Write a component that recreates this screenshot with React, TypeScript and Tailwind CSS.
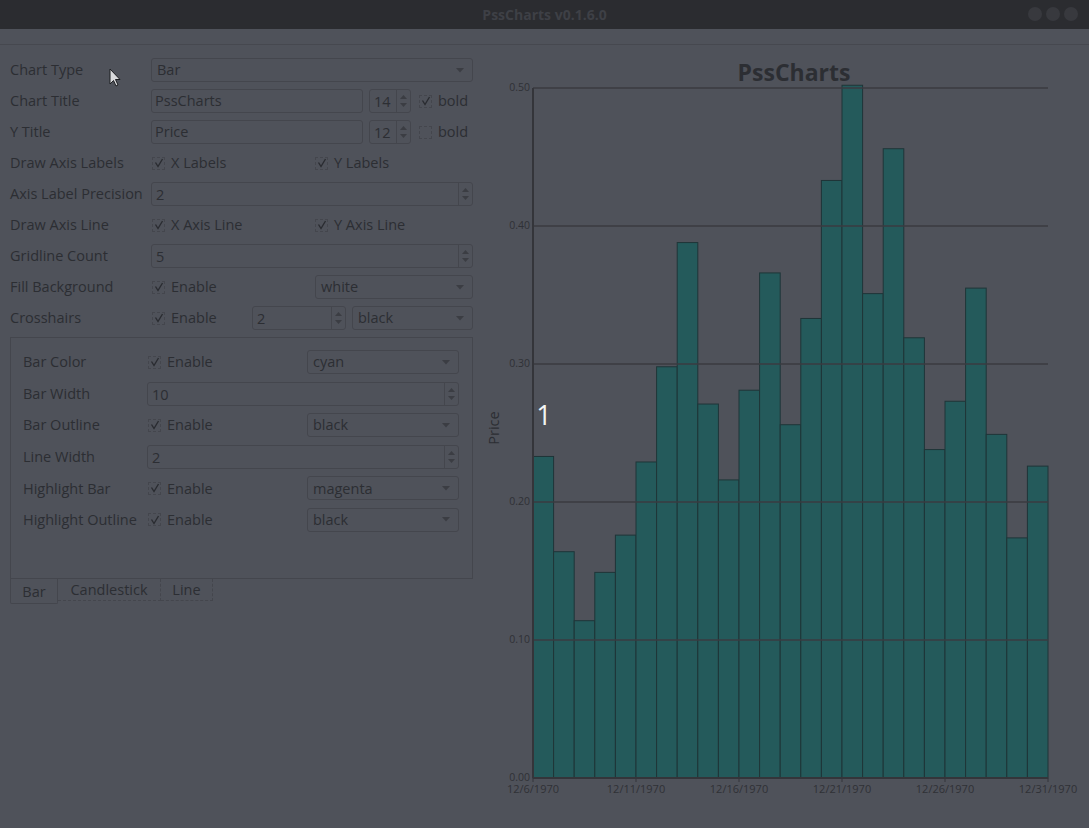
import React from "react";

const font = { fontFamily: '"Open Sans", "DejaVu Sans", sans-serif' };

const bars = [
  0.233, 0.164, 0.114, 0.149, 0.176, 0.229, 0.298, 0.388, 0.271, 0.216, 0.281, 0.366, 0.256,
  0.333, 0.433, 0.502, 0.351, 0.456, 0.319, 0.238, 0.273, 0.355, 0.249, 0.174, 0.226,
];

function Check({ on = true }: { on?: boolean }) {
  return (
    <span className="w-[13px] h-[13px] border border-dashed border-[#44464d] flex items-center justify-center shrink-0">
      {on && (
        <svg width="10" height="10" viewBox="0 0 10 10">
          <path d="M1.5 4.5 L4 8.5 L8.5 1" fill="none" stroke="#2a2c31" strokeWidth="1.4" />
        </svg>
      )}
    </span>
  );
}

function CheckLabel({ text, on = true }: { text: string; on?: boolean }) {
  return (
    <div className="flex items-center gap-[6px]">
      <Check on={on} />
      <span>{text}</span>
    </div>
  );
}

function Combo({ value, className = "" }: { value: string; className?: string }) {
  return (
    <div className={`h-[24px] border border-[#44464d] rounded-[3px] flex items-center pl-[5px] pr-[8px] ${className}`}>
      <span className="flex-1">{value}</span>
      <svg width="8" height="5" viewBox="0 0 8 5">
        <path d="M0 0 L8 0 L4 4.5 Z" fill="#3b3d43" />
      </svg>
    </div>
  );
}

function Field({ value, className = "" }: { value: string; className?: string }) {
  return (
    <div className={`h-[24px] border border-[#44464d] rounded-[3px] flex items-center px-[3px] ${className}`}>
      {value}
    </div>
  );
}

function Spin({ value, className = "" }: { value: string; className?: string }) {
  return (
    <div className={`h-[24px] border border-[#44464d] rounded-[3px] flex items-center ${className}`}>
      <span className="flex-1 pl-[4px] pt-[2px]">{value}</span>
      <div className="w-[14px] h-full border-l border-[#44464d] flex flex-col items-center justify-center gap-[4px]">
        <svg width="7" height="4" viewBox="0 0 7 4">
          <path d="M0 4 L7 4 L3.5 0 Z" fill="#3b3d43" />
        </svg>
        <svg width="7" height="4" viewBox="0 0 7 4">
          <path d="M0 0 L7 0 L3.5 4 Z" fill="#3b3d43" />
        </svg>
      </div>
    </div>
  );
}

function Row({ label, children, w = "w-[141px]" }: { label: string; children: React.ReactNode; w?: string }) {
  return (
    <div className="h-[24px] flex items-center">
      <span className={`${w} shrink-0 whitespace-nowrap`}>{label}</span>
      {children}
    </div>
  );
}

function Chart() {
  const left = 53;
  const right = 568;
  const top = 42;
  const bottom = 732;
  const bw = (right - left) / bars.length;
  const yOf = (v: number) => bottom - (v / 0.5) * (bottom - top);
  const ticks = [0.5, 0.4, 0.3, 0.2, 0.1, 0.0];
  const xLabels = ["12/6/1970", "12/11/1970", "12/16/1970", "12/21/1970", "12/26/1970", "12/31/1970"];
  return (
    <svg width="609" height="760" viewBox="0 0 609 760" style={font} className="block">
      <text x="314" y="35" textAnchor="middle" fontSize="23" fontWeight="700" fill="#2c2e33">
        PssCharts
      </text>
      {bars.map((v, i) => (
        <rect
          key={i}
          x={left + i * bw}
          y={yOf(v)}
          width={bw}
          height={bottom - yOf(v)}
          fill="#245a5b"
          stroke="#1f3538"
          strokeWidth="1"
        />
      ))}
      {ticks.map((t) => (
        <g key={t}>
          <line x1={left} x2={right} y1={yOf(t)} y2={yOf(t)} stroke="#3a3b40" strokeWidth="1.5" />
          <text x={left - 3} y={yOf(t) + 3} textAnchor="end" fontSize="10.5" fill="#2f3136">
            {t.toFixed(2)}
          </text>
        </g>
      ))}
      <line x1={left} x2={left} y1={top} y2={bottom} stroke="#34353a" strokeWidth="2" />
      <line x1={left} x2={right} y1={bottom} y2={bottom} stroke="#34353a" strokeWidth="2" />
      {xLabels.map((l, i) => {
        const x = left + i * bw * 5;
        return (
          <g key={l}>
            <line x1={x} x2={x} y1={bottom} y2={bottom + 4} stroke="#34353a" strokeWidth="1" />
            <text x={x} y={bottom + 15} textAnchor="middle" fontSize="11" fill="#2f3136">
              {l}
            </text>
          </g>
        );
      })}
      <text
        x="19"
        y="382"
        textAnchor="middle"
        fontSize="14.5"
        fill="#2c2e33"
        transform="rotate(-90 19 382)"
      >
        Price
      </text>
      <text x="64" y="379" textAnchor="middle" fontSize="27" fill="#f4f4f4">
        1
      </text>
    </svg>
  );
}

export default function App() {
  return (
    <div className="w-[1089px] h-[828px] bg-[#4f525a] text-[14.5px] text-[#2c2e33] flex flex-col relative overflow-hidden" style={font}>
      {/* title bar */}
      <div className="h-[29px] shrink-0 bg-[#2b2c30] flex items-center justify-center relative">
        <span className="font-bold text-[14px] text-[#3e4046]">PssCharts v0.1.6.0</span>
        <div className="absolute right-[11px] top-[7px] flex gap-[4px]">
          <span className="w-[14px] h-[14px] rounded-full bg-[#38393e]" />
          <span className="w-[14px] h-[14px] rounded-full bg-[#38393e]" />
          <span className="w-[14px] h-[14px] rounded-full bg-[#38393e]" />
        </div>
      </div>
      <div className="h-[16px] shrink-0 border-b border-[#46484f]" />

      <div className="flex flex-1">
        {/* controls */}
        <div className="w-[480px] pl-[10px] pr-[7px] pt-[13px] flex flex-col gap-[7px]">
          <Row label="Chart Type">
            <Combo value="Bar" className="flex-1" />
          </Row>
          <Row label="Chart Title">
            <Field value="PssCharts" className="w-[212px]" />
            <Spin value="14" className="w-[42px] ml-[6px]" />
            <div className="ml-[8px]">
              <CheckLabel text="bold" />
            </div>
          </Row>
          <Row label="Y Title">
            <Field value="Price" className="w-[212px]" />
            <Spin value="12" className="w-[42px] ml-[6px]" />
            <div className="ml-[8px]">
              <CheckLabel text="bold" on={false} />
            </div>
          </Row>
          <Row label="Draw Axis Labels">
            <div className="w-[164px] pl-[1px]">
              <CheckLabel text="X Labels" />
            </div>
            <CheckLabel text="Y Labels" />
          </Row>
          <Row label="Axis Label Precision">
            <Spin value="2" className="flex-1" />
          </Row>
          <Row label="Draw Axis Line">
            <div className="w-[164px] pl-[1px]">
              <CheckLabel text="X Axis Line" />
            </div>
            <CheckLabel text="Y Axis Line" />
          </Row>
          <Row label="Gridline Count">
            <Spin value="5" className="flex-1" />
          </Row>
          <Row label="Fill Background">
            <div className="w-[164px] pl-[1px]">
              <CheckLabel text="Enable" />
            </div>
            <Combo value="white" className="flex-1" />
          </Row>
          <Row label="Crosshairs">
            <div className="w-[101px] pl-[1px]">
              <CheckLabel text="Enable" />
            </div>
            <Spin value="2" className="w-[94px]" />
            <Combo value="black" className="flex-1 ml-[6px]" />
          </Row>

          {/* group */}
          <div className="h-[242px] border border-[#44464d] pl-[12px] pr-[13px] pt-[12px] flex flex-col gap-[7.6px]">
            <Row label="Bar Color" w="w-[125px]">
              <div className="w-[159px]">
                <CheckLabel text="Enable" />
              </div>
              <Combo value="cyan" className="flex-1" />
            </Row>
            <Row label="Bar Width" w="w-[124px]">
              <Spin value="10" className="flex-1" />
            </Row>
            <Row label="Bar Outline" w="w-[125px]">
              <div className="w-[159px]">
                <CheckLabel text="Enable" />
              </div>
              <Combo value="black" className="flex-1" />
            </Row>
            <Row label="Line Width" w="w-[124px]">
              <Spin value="2" className="flex-1" />
            </Row>
            <Row label="Highlight Bar" w="w-[125px]">
              <div className="w-[159px]">
                <CheckLabel text="Enable" />
              </div>
              <Combo value="magenta" className="flex-1" />
            </Row>
            <Row label="Highlight Outline" w="w-[125px]">
              <div className="w-[159px]">
                <CheckLabel text="Enable" />
              </div>
              <Combo value="black" className="flex-1" />
            </Row>
          </div>

          {/* tabs */}
          <div className="-mt-[7px] flex items-start">
            <div className="w-[48px] h-[25px] border-x border-b border-[#44464d] rounded-b-[2px] flex items-center justify-center pt-[2px] bg-[#4f525a]">
              Bar
            </div>
            <div className="w-[103px] h-[22px] border-r border-b border-dashed border-[#44464d] flex items-center justify-center">
              Candlestick
            </div>
            <div className="w-[52px] h-[22px] border-r border-b border-dashed border-[#44464d] flex items-center justify-center">
              Line
            </div>
          </div>
        </div>

        {/* chart */}
        <div className="flex-1 pt-[1px]">
          <Chart />
        </div>
      </div>

      {/* mouse cursor */}
      <svg className="absolute left-[109px] top-[68px]" width="12" height="20" viewBox="0 0 12 20">
        <path d="M1 1 L1 16 L4.5 12.5 L7 18 L9 17 L6.5 11.5 L11 11.5 Z" fill="#d9dadc" stroke="#1d1e21" strokeWidth="1" />
      </svg>
    </div>
  );
}
